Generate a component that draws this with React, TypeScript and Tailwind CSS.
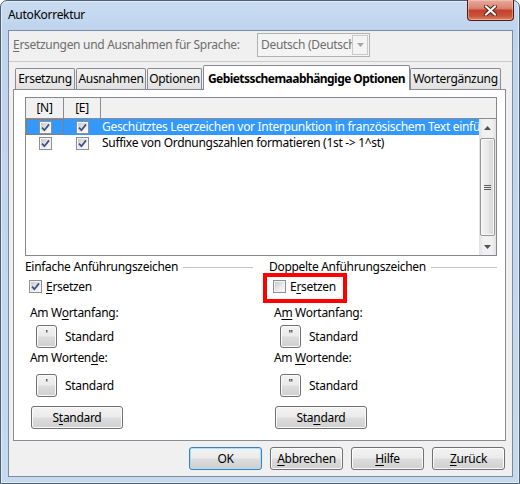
import React from 'react'

const FONT = "font-['Noto_Sans',sans-serif]"
const BTN_BG = 'bg-[linear-gradient(180deg,#f3f3f3_0%,#ebebeb_48%,#dddddd_52%,#cfcfcf_100%)]'

function Mn({ children }: { children: React.ReactNode }) {
  return <span className="underline underline-offset-[2px] decoration-1">{children}</span>
}

function Button({ children, className = '', primary = false }: { children: React.ReactNode; className?: string; primary?: boolean }) {
  const edge = primary
    ? 'border-[#3c7fb1] shadow-[inset_0_0_0_1px_#a6e0f8]'
    : 'border-[#707070] shadow-[inset_0_0_0_1px_#fbfbfb]'
  return (
    <div className={`h-[23px] flex items-center justify-center rounded-[3px] border ${edge} ${BTN_BG} ${className}`}>
      <span>{children}</span>
    </div>
  )
}

function Check({ on = false }: { on?: boolean }) {
  return (
    <span className="w-[13px] h-[13px] shrink-0 border border-[#8e8f8f] bg-[#f4f4f4] p-[1px] flex">
      <span className="relative flex-1 bg-[linear-gradient(135deg,#c4c8ce_0%,#e6e7e9_50%,#fbfbfb_100%)]">
        {on && (
          <svg className="absolute left-0 top-0" width="9" height="9" viewBox="0 0 9 9">
            <path d="M1 4.6 L3.4 7.2 L8 1.4" fill="none" stroke="#3d4f86" strokeWidth="1.7" />
          </svg>
        )}
      </span>
    </span>
  )
}

function CloseButton() {
  return (
    <div className="-mt-px mr-[5px] w-[47px] h-[21px] rounded-b-[4px] border border-t-0 border-[#4a1f1a] bg-[linear-gradient(180deg,#e9ab9c_0%,#d98170_42%,#c4432d_52%,#c9533a_80%,#de8a68_100%)] shadow-[inset_0_0_0_1px_rgba(255,210,200,0.45)] flex items-center justify-center">
      <svg width="13" height="11" viewBox="0 0 13 11">
        <path d="M2 1.5 L11 9.5 M11 1.5 L2 9.5" stroke="#5b2620" strokeWidth="4" strokeLinecap="square" />
        <path d="M2 1.5 L11 9.5 M11 1.5 L2 9.5" stroke="#ffffff" strokeWidth="2" strokeLinecap="square" />
      </svg>
    </div>
  )
}

function Tab({ label, className, active = false }: { label: string; className: string; active?: boolean }) {
  if (active) {
    return (
      <div className={`relative z-10 -mb-px h-[25px] pt-[2px] border border-b-0 border-[#898c95] rounded-t-[2px] bg-white font-bold tracking-[-0.55px] flex items-center justify-center whitespace-nowrap ${className}`}>
        {label}
      </div>
    )
  }
  return (
    <div className={`h-[21px] border border-b-0 border-[#898c95] rounded-t-[2px] bg-[linear-gradient(180deg,#f3f3f3_0%,#ebebeb_50%,#e1e1e1_100%)] flex items-center justify-center whitespace-nowrap ${className}`}>
      {label}
    </div>
  )
}

function ScrollBar() {
  return (
    <div className="w-[17px] flex flex-col bg-[linear-gradient(90deg,#e2e2e2_0%,#f1f1f1_25%,#f1f1f1_75%,#e2e2e2_100%)]">
      <div className="h-[17px] flex items-center justify-center">
        <svg width="7" height="4" viewBox="0 0 7 4"><path d="M0 4 L3.5 0 L7 4 Z" fill="#505050" /></svg>
      </div>
      <div className="flex-1 px-[1px] py-[2px]">
        <div className="h-full rounded-[2px] border border-[#959595] bg-[linear-gradient(90deg,#f4f4f4_0%,#e9e9e9_50%,#d5d5d5_100%)] shadow-[inset_0_0_0_1px_#fafafa] flex flex-col items-center justify-center gap-[1px]">
          <span className="w-[7px] h-px bg-[#5c5c5c]" />
          <span className="w-[7px] h-px bg-[#5c5c5c]" />
          <span className="w-[7px] h-px bg-[#5c5c5c]" />
        </div>
      </div>
      <div className="h-[17px] flex items-center justify-center">
        <svg width="7" height="4" viewBox="0 0 7 4"><path d="M0 0 L3.5 4 L7 0 Z" fill="#505050" /></svg>
      </div>
    </div>
  )
}

function Row({ text, selected = false }: { text: string; selected?: boolean }) {
  return (
    <div className={`h-[16px] flex ${selected ? 'bg-[#3399ff] text-white' : ''}`}>
      <div className={`w-[38px] flex items-center justify-center ${selected ? 'border border-dotted border-[#c96a10]' : ''}`}>
        <Check on />
      </div>
      <div className="w-[37px] flex items-center justify-center">
        <Check on />
      </div>
      <div className="flex-1 min-w-0 pl-[1px] overflow-hidden whitespace-nowrap leading-[16px]">{text}</div>
    </div>
  )
}

function ListBox() {
  return (
    <div className="w-[472px] h-[159px] border border-[#828790] bg-white flex flex-col">
      <div className="h-[21px] flex border-b border-[#8c8c8c] bg-[#f1f1f1]">
        <div className="w-[38px] border-r border-[#8c8c8c] flex items-center justify-center">[N]</div>
        <div className="w-[37px] border-r border-[#8c8c8c] flex items-center justify-center">[E]</div>
        <div className="flex-1" />
      </div>
      <div className="flex-1 flex min-h-0">
        <div className="flex-1 min-w-0">
          <Row selected text="Geschütztes Leerzeichen vor Interpunktion in französischem Text einfügen" />
          <Row text="Suffixe von Ordnungszahlen formatieren (1st -> 1^st)" />
        </div>
        <ScrollBar />
      </div>
    </div>
  )
}

interface QuoteGroupProps {
  title: string
  replace: React.ReactNode
  start: React.ReactNode
  end: React.ReactNode
  reset: React.ReactNode
  glyph: string
  checked: boolean
  marked?: boolean
}

function QuoteGroup({ title, replace, start, end, reset, glyph, checked, marked = false }: QuoteGroupProps) {
  return (
    <div className="w-[228px] flex flex-col">
      <div className="h-[16px] flex items-center">
        <span className="whitespace-nowrap">{title}</span>
        <span className="ml-[5px] flex-1 h-px bg-[#c5c5c5]" />
      </div>
      <div className="relative mt-[4px] h-[15px] pl-[4px] flex items-center gap-[4px]">
        <Check on={checked} />
        <span>{replace}</span>
        {marked && <div className="absolute -left-[6px] -top-[6px] w-[84px] h-[30px] border-4 border-[#ff0000]" />}
      </div>
      <div className="mt-[11px] h-[16px] pl-[5px] flex items-center"><span>{start}</span></div>
      <div className="mt-[5px] h-[21px] pl-[11px] flex items-center">
        <Button className="w-[21px] h-[21px] text-[11px] leading-none pb-[6px]">{glyph}</Button>
        <span className="ml-[8px]">Standard</span>
      </div>
      <div className="mt-[3px] h-[16px] pl-[5px] flex items-center"><span>{end}</span></div>
      <div className="mt-[9px] h-[21px] pl-[11px] flex items-center">
        <Button className="w-[21px] h-[21px] text-[11px] leading-none pb-[6px]">{glyph}</Button>
        <span className="ml-[8px]">Standard</span>
      </div>
      <Button className="mt-[10px] ml-[6px] w-[92px]">{reset}</Button>
    </div>
  )
}

export default function App() {
  return (
    <div className={`${FONT} text-[12px] tracking-[-0.3px] text-black w-[520px] h-[484px] rounded-t-[7px] border border-[#4e5f75] bg-[linear-gradient(180deg,#c9dcf1_0%,#bfd4ed_6%,#c6d9ef_100%)] shadow-[inset_0_0_0_1px_#e4eef9] flex flex-col`}>
      <div className="h-[29px] flex items-start justify-between">
        <span className="pl-[7px] h-[28px] flex items-center">AutoKorrektur</span>
        <CloseButton />
      </div>

      <div className="ml-[7px] w-[505px] h-[447px] border border-[#7b8ba0] bg-[#f0f0f0] flex flex-col">
        <div className="h-[31px] border-b border-[#cacaca] pt-[2px] pl-[4px] flex items-start">
          <span className="w-[244px] h-[24px] flex items-center text-[#6d6d6d] whitespace-nowrap">
            <span><Mn>E</Mn>rsetzungen und Ausnahmen für Sprache:</span>
          </span>
          <div className="w-[113px] h-[24px] border border-[#adb2b5] bg-[#f4f4f4] flex items-center">
            <span className="flex-1 min-w-0 pl-[3px] overflow-hidden whitespace-nowrap text-[#6d6d6d]">Deutsch (Deutschland)</span>
            <span className="w-[16px] h-[20px] mr-px border border-[#c9c9c9] flex items-center justify-center">
              <svg width="7" height="4" viewBox="0 0 7 4"><path d="M0 0 L3.5 4 L7 0 Z" fill="#a6a6a6" /></svg>
            </span>
          </div>
        </div>

        <div className="h-[27px] pl-[6px] flex items-end">
          <Tab label="Ersetzung" className="w-[60px]" />
          <Tab label="Ausnahmen" className="ml-px w-[70px]" />
          <Tab label="Optionen" className="ml-px w-[55px]" />
          <Tab label="Gebietsschemaabhängige Optionen" className="ml-px w-[207px]" active />
          <Tab label="Wortergänzung" className="w-[91px]" />
        </div>

        <div className="ml-[4px] w-[493px] h-[352px] border border-[#898c95] bg-white pl-[11px] pt-[7px]">
          <ListBox />
          <div className="mt-[3px] flex gap-[16px]">
            <QuoteGroup
              title="Einfache Anführungszeichen"
              checked
              glyph="'"
              replace={<><Mn>E</Mn>rsetzen</>}
              start={<>Am W<Mn>o</Mn>rtanfang:</>}
              end={<>Am Worten<Mn>d</Mn>e:</>}
              reset={<>S<Mn>t</Mn>andard</>}
            />
            <QuoteGroup
              title="Doppelte Anführungszeichen"
              checked={false}
              marked
              glyph={'"'}
              replace={<>E<Mn>r</Mn>setzen</>}
              start={<>A<Mn>m</Mn> Wortanfang:</>}
              end={<>Am <Mn>W</Mn>ortende:</>}
              reset={<>Sta<Mn>n</Mn>dard</>}
            />
          </div>
        </div>

        <div className="mt-[6px] pr-[7px] flex justify-end gap-[8px]">
          <Button primary className="w-[73px]">OK</Button>
          <Button className="w-[73px]"><Mn>A</Mn>bbrechen</Button>
          <Button className="w-[73px]"><Mn>H</Mn>ilfe</Button>
          <Button className="w-[73px]"><Mn>Z</Mn>urück</Button>
        </div>
      </div>
    </div>
  )
}
